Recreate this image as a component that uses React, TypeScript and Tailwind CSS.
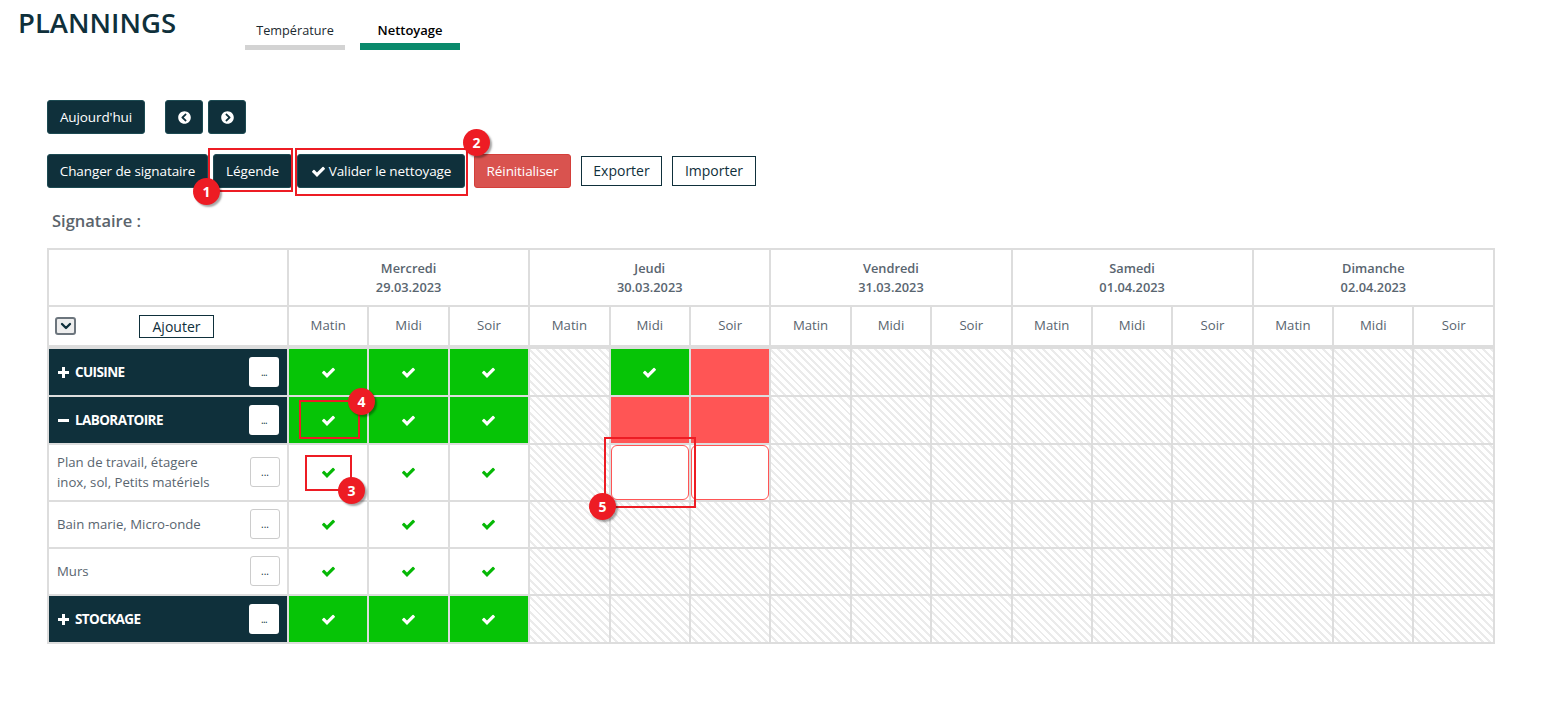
import { ChevronDown } from "lucide-react";
import { FaChevronCircleLeft, FaChevronCircleRight } from "react-icons/fa";

const days = [
  { name: "Mercredi", date: "29.03.2023" },
  { name: "Jeudi", date: "30.03.2023" },
  { name: "Vendredi", date: "31.03.2023" },
  { name: "Samedi", date: "01.04.2023" },
  { name: "Dimanche", date: "02.04.2023" },
];

const slots = ["Matin", "Midi", "Soir"];

// g = vert, r = rouge, c = coche seule, o = à faire, h = hachuré
type Row = { label: string; kind: "group" | "item"; open?: boolean; h: string; cells: string };

const rows: Row[] = [
  { label: "CUISINE", kind: "group", h: "h-[49px]", cells: "ggghgrhhhhhhhhh" },
  { label: "LABORATOIRE", kind: "group", open: true, h: "h-[48px]", cells: "ggghrrhhhhhhhhh" },
  { label: "Plan de travail, étagere inox, sol, Petits matériels", kind: "item", h: "h-[57px]", cells: "ccchoohhhhhhhhh" },
  { label: "Bain marie, Micro-onde", kind: "item", h: "h-[47px]", cells: "ccchhhhhhhhhhhh" },
  { label: "Murs", kind: "item", h: "h-[47px]", cells: "ccchhhhhhhhhhhh" },
  { label: "STOCKAGE", kind: "group", h: "h-[48px]", cells: "ggghhhhhhhhhhhh" },
];

const hatch =
  "bg-[repeating-linear-gradient(45deg,#ffffff,#ffffff_3.5px,#ebebeb_3.5px,#ebebeb_5.5px)]";

const darkBtn =
  "h-[34px] rounded-[3px] border border-[#1c4a52] bg-[#0f303b] text-[13.5px] tracking-[-0.1px] text-white flex items-center justify-center";

function Check({ className }: { className: string }) {
  return (
    <svg viewBox="0 0 1792 1792" fill="currentColor" className={className}>
      <path d="M1671 566q0 40-28 68l-724 724-136 136q-28 28-68 28t-68-28l-136-136-362-362q-28-28-28-68t28-68l136-136q28-28 68-28t68 28l294 295 656-657q28-28 68-28t68 28l136 136q28 28 28 68z" />
    </svg>
  );
}

function Toggle({ open }: { open?: boolean }) {
  return (
    <svg viewBox="0 0 11 11" fill="currentColor" className="h-[11px] w-[11px] shrink-0">
      <path d={open ? "M0 4h11v3H0z" : "M4 0h3v4h4v3H7v4H4V7H0V4h4z"} />
    </svg>
  );
}

function Cell({ type }: { type: string }) {
  const base = "border-2 border-[#dddddd] p-0 text-center";
  if (type === "g")
    return (
      <td className={`${base} bg-[#06c406]`}>
        <Check className="mx-auto h-[15px] w-[15px] text-white" />
      </td>
    );
  if (type === "r") return <td className={`${base} bg-[#ff5555]`} />;
  if (type === "c")
    return (
      <td className={`${base} bg-white`}>
        <Check className="mx-auto h-[15px] w-[15px] text-[#06b806]" />
      </td>
    );
  if (type === "o")
    return (
      <td className={`${base} bg-white`}>
        <div className="mx-auto h-[55px] w-[78px] rounded-[6px] border border-[#ff5555] bg-white" />
      </td>
    );
  return <td className={`${base} ${hatch}`} />;
}

function Mark({ n, className }: { n: number; className: string }) {
  return (
    <div
      className={`absolute flex h-[27px] w-[27px] items-center justify-center rounded-full bg-[#ed1c24] text-[14px] font-bold text-white shadow-[2px_2px_2px_rgba(0,0,0,0.35)] ${className}`}
    >
      {n}
    </div>
  );
}

export default function App() {
  return (
    <div className="relative h-[710px] w-[1553px] overflow-hidden bg-white font-['Open_Sans',sans-serif] text-[#59656f]">
      {/* Entête */}
      <div className="flex h-[50px] items-end">
        <h1 className="ml-[18px] w-[227px] self-start pt-[4px] text-[27.5px] leading-[38px] font-semibold text-[#0f303b]">
          PLANNINGS
        </h1>
        <div className="flex h-[50px] w-[100px] items-end justify-center border-b-[5px] border-[#d3d3d3] pb-[5px] text-[12.7px] text-[#1c2a30]">
          Température
        </div>
        <div className="ml-[15px] flex h-[50px] w-[100px] items-end justify-center border-b-[7px] border-[#0a8a6c] pb-[3px] text-[13px] font-semibold text-black">
          Nettoyage
        </div>
      </div>

      {/* Boutons */}
      <div className="mt-[50px] ml-[47px] flex">
        <button className={`${darkBtn} w-[98px]`}>Aujourd'hui</button>
        <button className={`${darkBtn} ml-[20px] w-[38px]`}>
          <FaChevronCircleLeft className="text-[13px]" />
        </button>
        <button className={`${darkBtn} ml-[5px] w-[38px]`}>
          <FaChevronCircleRight className="text-[13px]" />
        </button>
      </div>
      <div className="mt-[20px] ml-[47px] flex items-center">
        <button className={`${darkBtn} w-[161px]`}>Changer de signataire</button>
        <button className={`${darkBtn} ml-[5px] w-[79px]`}>Légende</button>
        <button className={`${darkBtn} ml-[5px] w-[168px] gap-[3px]`}>
          <Check className="h-[15px] w-[15px]" />
          Valider le nettoyage
        </button>
        <button className="ml-[9px] h-[34px] w-[97px] rounded-[3px] border border-[#d43f3a] bg-[#d9534f] text-[13.5px] tracking-[-0.1px] text-white">
          Réinitialiser
        </button>
        <button className="ml-[10px] h-[30px] w-[81px] border border-[#0f303b] bg-white pb-[1px] text-[14px] text-[#0f303b]">
          Exporter
        </button>
        <button className="ml-[10px] h-[30px] w-[84px] border border-[#0f303b] bg-white pb-[1px] text-[14px] text-[#0f303b]">
          Importer
        </button>
      </div>

      <div className="mt-[20px] ml-[52px] text-[16.5px] leading-[26px] font-semibold text-[#5b646c]">Signataire :</div>

      {/* Planning */}
      <table className="mt-[14px] ml-[47px] w-[1448px] table-fixed border-collapse text-[13.5px]">
        <colgroup>
          <col className="w-[240px]" />
          {Array.from({ length: 15 }).map((_, i) => (
            <col key={i} />
          ))}
        </colgroup>
        <thead>
          <tr className="h-[57px]">
            <th className="border-2 border-[#dddddd]" />
            {days.map((d) => (
              <th key={d.name} colSpan={3} className="border-2 border-[#dddddd] text-center text-[12.8px] leading-[19px] font-semibold">
                <div>{d.name}</div>
                <div>{d.date}</div>
              </th>
            ))}
          </tr>
          <tr className="h-[41px]">
            <th className="border-2 border-b-[4px] border-[#dddddd] p-0 font-normal">
              <div className="flex items-center">
                <span className="ml-[6px] flex h-[18px] w-[21px] items-center justify-center rounded-[3px] border-2 border-[#6c757d] bg-[#eeeeee]">
                  <ChevronDown className="h-[16px] w-[16px] text-[#0f303b]" strokeWidth={3.5} />
                </span>
                <button className="ml-[63px] h-[23px] w-[75px] border border-[#0f303b] bg-white pt-[1px] text-[14px] leading-none text-[#0f303b]">
                  Ajouter
                </button>
              </div>
            </th>
            {days.flatMap((d) =>
              slots.map((s) => (
                <th key={d.name + s} className="border-2 border-b-[4px] border-[#dddddd] text-center text-[13.2px] font-normal">
                  {s}
                </th>
              )),
            )}
          </tr>
        </thead>
        <tbody>
          {rows.map((r) => (
            <tr key={r.label} className={r.h}>
              {r.kind === "group" ? (
                <td className="border-2 border-[#dddddd] bg-[#0f303b] p-0">
                  <div className="flex items-center pr-[8px] pl-[9px] text-[13.5px] font-bold tracking-[-0.6px] text-white">
                    <Toggle open={r.open} />
                    <span className="ml-[6px]">{r.label}</span>
                    <button className="ml-auto flex h-[30px] w-[30px] items-center justify-center rounded-[3px] bg-white text-[10px] font-normal text-[#0f303b]">
                      ...
                    </button>
                  </div>
                </td>
              ) : (
                <td className="border-2 border-[#dddddd] bg-white p-0">
                  <div className="flex items-center pr-[7px] pb-[2px] pl-[8px] text-[13.2px] leading-[20px]">
                    <span className="w-[165px]">{r.label}</span>
                    <button className="ml-auto flex h-[30px] w-[30px] items-center justify-center rounded-[3px] border border-[#cccccc] bg-white text-[10px] text-[#0f303b]">
                      ...
                    </button>
                  </div>
                </td>
              )}
              {r.cells.split("").map((c, i) => (
                <Cell key={i} type={c} />
              ))}
            </tr>
          ))}
        </tbody>
      </table>

      {/* Annotations */}
      <div className="absolute top-[148px] left-[208px] h-[44px] w-[85px] border-2 border-[#ed1c24]" />
      <div className="absolute top-[148px] left-[295px] h-[48px] w-[173px] border-2 border-[#ed1c24]" />
      <div className="absolute top-[455px] left-[305px] h-[36px] w-[47px] border-2 border-[#ed1c24]" />
      <div className="absolute top-[400px] left-[299px] h-[39px] w-[61px] border-2 border-[#ed1c24]" />
      <div className="absolute top-[437px] left-[604px] h-[71px] w-[92px] border-2 border-[#ed1c24]" />
      <Mark n={1} className="top-[178px] left-[193px]" />
      <Mark n={2} className="top-[129px] left-[463px]" />
      <Mark n={3} className="top-[477px] left-[338px]" />
      <Mark n={4} className="top-[388px] left-[348px]" />
      <Mark n={5} className="top-[493px] left-[589px]" />
    </div>
  );
}
